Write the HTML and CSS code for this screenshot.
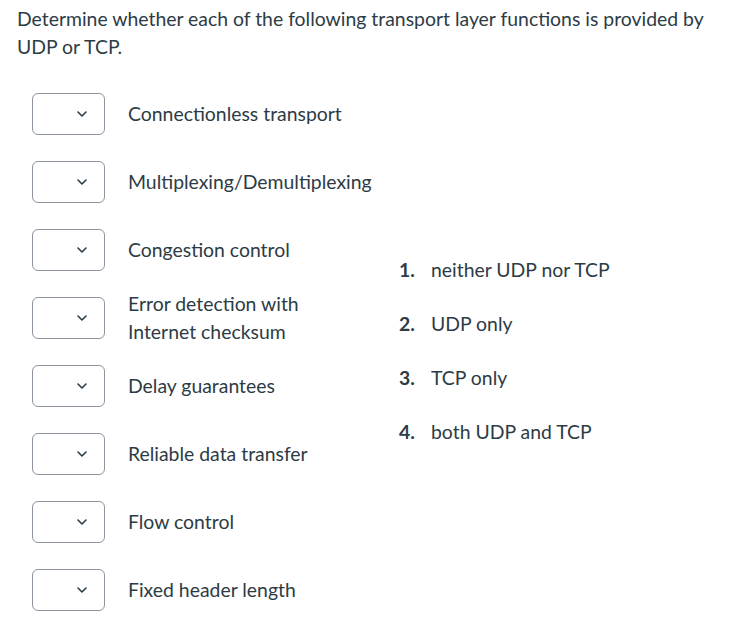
FILE: index.html
```html
<!DOCTYPE html>
<html lang="en">
<head>
<meta charset="utf-8">
<title>Matching question</title>
<link rel="stylesheet" href="styles.css">
</head>
<body>
<div class="page">
  <p class="prompt">Determine whether each of the following transport layer functions is provided by UDP or TCP.</p>
  <div class="question">
    <div class="pairs">
      <div class="pair"><div class="select"><svg class="chev" viewBox="0 0 10 6" width="10" height="6"><path d="M1 1 L5 5 L9 1" fill="none" stroke="#2d3b45" stroke-width="1.6" stroke-linecap="round" stroke-linejoin="round"/></svg></div><div class="label">Connectionless transport</div></div>
      <div class="pair"><div class="select"><svg class="chev" viewBox="0 0 10 6" width="10" height="6"><path d="M1 1 L5 5 L9 1" fill="none" stroke="#2d3b45" stroke-width="1.6" stroke-linecap="round" stroke-linejoin="round"/></svg></div><div class="label">Multiplexing/Demultiplexing</div></div>
      <div class="pair"><div class="select"><svg class="chev" viewBox="0 0 10 6" width="10" height="6"><path d="M1 1 L5 5 L9 1" fill="none" stroke="#2d3b45" stroke-width="1.6" stroke-linecap="round" stroke-linejoin="round"/></svg></div><div class="label">Congestion control</div></div>
      <div class="pair"><div class="select"><svg class="chev" viewBox="0 0 10 6" width="10" height="6"><path d="M1 1 L5 5 L9 1" fill="none" stroke="#2d3b45" stroke-width="1.6" stroke-linecap="round" stroke-linejoin="round"/></svg></div><div class="label">Error detection with<br>Internet checksum</div></div>
      <div class="pair"><div class="select"><svg class="chev" viewBox="0 0 10 6" width="10" height="6"><path d="M1 1 L5 5 L9 1" fill="none" stroke="#2d3b45" stroke-width="1.6" stroke-linecap="round" stroke-linejoin="round"/></svg></div><div class="label">Delay guarantees</div></div>
      <div class="pair"><div class="select"><svg class="chev" viewBox="0 0 10 6" width="10" height="6"><path d="M1 1 L5 5 L9 1" fill="none" stroke="#2d3b45" stroke-width="1.6" stroke-linecap="round" stroke-linejoin="round"/></svg></div><div class="label">Reliable data transfer</div></div>
      <div class="pair"><div class="select"><svg class="chev" viewBox="0 0 10 6" width="10" height="6"><path d="M1 1 L5 5 L9 1" fill="none" stroke="#2d3b45" stroke-width="1.6" stroke-linecap="round" stroke-linejoin="round"/></svg></div><div class="label">Flow control</div></div>
      <div class="pair"><div class="select"><svg class="chev" viewBox="0 0 10 6" width="10" height="6"><path d="M1 1 L5 5 L9 1" fill="none" stroke="#2d3b45" stroke-width="1.6" stroke-linecap="round" stroke-linejoin="round"/></svg></div><div class="label">Fixed header length</div></div>
    </div>
    <ol class="options">
      <li><span class="num">1.</span><span>neither UDP nor TCP</span></li>
      <li><span class="num">2.</span><span>UDP only</span></li>
      <li><span class="num">3.</span><span>TCP only</span></li>
      <li><span class="num">4.</span><span>both UDP and TCP</span></li>
    </ol>
  </div>
</div>
</body>
</html>
```
FILE: styles.css
```css
html, body {
  margin: 0;
  padding: 0;
  background: #ffffff;
}
body {
  font-family: Lato, "Open Sans", sans-serif;
  font-size: 19.4px;
  color: #2d3b45;
}
.page {
  padding: 5px 17px 0 17px;
}
.prompt {
  margin: 0;
  line-height: 28px;
}
.question {
  display: flex;
  margin-top: 32px;
}
.pairs {
  display: flex;
  flex-direction: column;
  gap: 26px;
  padding-left: 15px;
  width: 365px;
  flex-shrink: 0;
}
.pair {
  display: flex;
  align-items: center;
  gap: 23px;
  height: 42px;
}
.select {
  box-sizing: border-box;
  width: 73px;
  height: 42px;
  border: 1px solid #8d959f;
  border-radius: 6px;
  display: flex;
  align-items: center;
  justify-content: flex-end;
  padding-right: 17px;
  flex-shrink: 0;
}
.chev {
  display: block;
}
.label {
  line-height: 28px;
  white-space: nowrap;
}
.options {
  list-style: none;
  margin: 163px 0 0 0;
  padding: 0 0 0 2px;
  display: flex;
  flex-direction: column;
  gap: 26px;
}
.options li {
  display: flex;
  line-height: 28px;
}
.num {
  font-weight: 700;
  width: 32px;
}
```
